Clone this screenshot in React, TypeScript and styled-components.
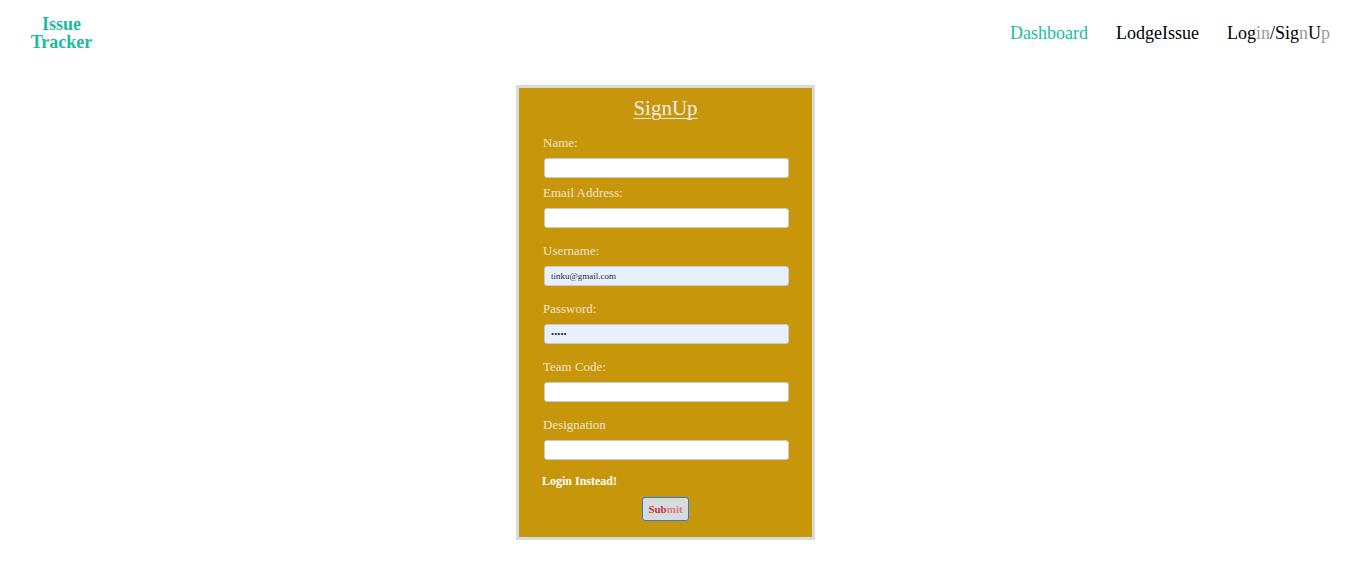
import React from "react";
import styled, { createGlobalStyle } from "styled-components";

const Global = createGlobalStyle`
  html, body { margin: 0; padding: 0; background: #ffffff; }
  body { font-family: "Liberation Serif", "DejaVu Serif", serif; }
  * { box-sizing: border-box; }
`;

const Header = styled.header`
  display: flex;
  justify-content: space-between;
  align-items: center;
  height: 66px;
  padding: 0 19px 0 28px;
`;

const Logo = styled.div`
  width: 67px;
  text-align: center;
  font-weight: bold;
  font-size: 18px;
  color: #1abc9c;
`;

const LogoLine = styled.span`
  display: block;
  line-height: 18px;
`;

const Nav = styled.nav`
  display: flex;
  gap: 28px;
  align-items: center;
`;

const NavLink = styled.a<{ $active?: boolean }>`
  font-size: 18px;
  color: ${(p) => (p.$active ? "#1abc9c" : "#000")};
  text-decoration: none;
`;

const Faded = styled.span`
  color: #9a9a9a;
`;

const Main = styled.main`
  display: flex;
  justify-content: center;
  padding: 19px 18px 0 0;
`;

const Card = styled.form`
  width: 299px;
  border: 3px solid #d4dcdc;
  background: #c8960a;
  padding: 7px 24px 16px;
  display: flex;
  flex-direction: column;
`;

const Title = styled.h2`
  margin: 0 0 12px;
  text-align: center;
  font-weight: normal;
  font-size: 21px;
  line-height: 26px;
  color: #ececec;
  text-decoration: underline;
  text-underline-offset: 3px;
  text-decoration-thickness: 1px;
`;

const Label = styled.label<{ $gap?: number }>`
  display: block;
  font-size: 13px;
  line-height: 20px;
  color: #eee4cf;
  margin-top: ${(p) => p.$gap ?? 0}px;
  margin-bottom: 5px;
`;

const Input = styled.input<{ $filled?: boolean }>`
  display: block;
  width: 245px;
  height: 20px;
  margin-left: 1px;
  border: 1px solid #c9c9c9;
  border-radius: 3px;
  background: ${(p) => (p.$filled ? "#e8f0fe" : "#ffffff")};
  padding: 0 6px;
  font-family: "Liberation Serif", serif;
  font-size: 9px;
  color: #1f2a44;
  outline: none;
`;

const LoginLink = styled.a`
  display: block;
  margin: 11px 0 0 -1px;
  font-size: 12px;
  line-height: 20px;
  font-weight: bold;
  color: #ffffff;
  text-decoration: none;
`;

const Submit = styled.button`
  align-self: center;
  margin-top: 6px;
  width: 47px;
  height: 24px;
  border: 1px solid #2a7be4;
  border-radius: 3px;
  background: #d6dcdc;
  font-family: "Liberation Serif", serif;
  font-size: 11px;
  font-weight: bold;
  color: #c8324e;
  padding: 0;
`;

const Light = styled.span`
  color: #e07890;
`;

const fields: { label: string; gap: number; filled?: boolean; value?: string; type?: string }[] = [
  { label: "Name:", gap: 0 },
  { label: "Email Address:", gap: 5 },
  { label: "Username:", gap: 13, filled: true, value: "tinku@gmail.com" },
  { label: "Password:", gap: 13, filled: true, value: "abcde", type: "password" },
  { label: "Team Code:", gap: 13 },
  { label: "Designation", gap: 13 },
];

export default function App() {
  return (
    <>
      <Global />
      <Header>
        <Logo>
          <LogoLine>Issue</LogoLine>
          <LogoLine>Tracker</LogoLine>
        </Logo>
        <Nav>
          <NavLink $active href="#">Dashboard</NavLink>
          <NavLink href="#">LodgeIssue</NavLink>
          <NavLink href="#">
            Log<Faded>in</Faded>/Sig<Faded>n</Faded>U<Faded>p</Faded>
          </NavLink>
        </Nav>
      </Header>
      <Main>
        <Card onSubmit={(e) => e.preventDefault()}>
          <Title>SignUp</Title>
          {fields.map((f) => (
            <React.Fragment key={f.label}>
              <Label $gap={f.gap}>{f.label}</Label>
              <Input
                $filled={f.filled}
                type={f.type ?? "text"}
                defaultValue={f.value}
              />
            </React.Fragment>
          ))}
          <LoginLink href="#">Login Instead!</LoginLink>
          <Submit type="submit">
            Sub<Light>mit</Light>
          </Submit>
        </Card>
      </Main>
    </>
  );
}
